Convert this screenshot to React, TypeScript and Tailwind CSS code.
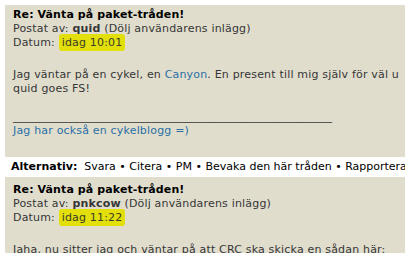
import React from "react";

const font = { fontFamily: '"DejaVu Sans", Verdana, sans-serif' };

function Highlight({ children }: { children: React.ReactNode }) {
  return (
    <span className="rounded-[3px] bg-[#e2df0a] px-[3px] py-[2px] text-[#3c3c28]">
      {children}
    </span>
  );
}

function PostHeader({ author, time }: { author: string; time: string }) {
  return (
    <div>
      <div className="font-bold text-black tracking-[0.1px]">Re: Vänta på paket-tråden!</div>
      <div>
        Postat av: <span className="font-bold">{author}</span> (Dölj användarens inlägg)
      </div>
      <div>
        Datum: <Highlight>{time}</Highlight>
      </div>
    </div>
  );
}

export default function App() {
  return (
    <div
      className="w-[405px] h-[253px] overflow-hidden bg-white text-[11px] leading-[14px] tracking-[0.18px] text-[#363636] whitespace-nowrap"
      style={font}
    >
      <div className="pt-[5px] pl-[5px]">
        <div className="bg-[#e0ddcd] pl-[8px] pt-[3px] pb-[19px]">
          <PostHeader author="quid" time="idag 10:01" />
          <div className="mt-[18px]">
            <div>
              Jag väntar på en cykel, en <span className="text-[#2a6fa6]">Canyon</span>. En
              present till mig själv för väl u
            </div>
            <div>quid goes FS!</div>
            <div>&nbsp;</div>
            <div className="tracking-normal">{"_".repeat(58)}</div>
            <div className="text-[#2a6fa6]">Jag har också en cykelblogg =)</div>
          </div>
        </div>
      </div>

      <div className="flex h-[20px] items-center pl-[11px] text-black tracking-normal">
        <span className="font-bold">Alternativ:</span>
        <span className="ml-[7px]">
          Svara • Citera • PM • Bevaka den här tråden • Rapportera dett
        </span>
      </div>

      <div className="pl-[5px]">
        <div className="bg-[#e0ddcd] pl-[8px] pt-[6px] pb-[20px]">
          <PostHeader author="pnkcow" time="idag 11:22" />
          <div className="mt-[18px]">
            <div>Jaha, nu sitter jag och väntar på att CRC ska skicka en sådan här:</div>
          </div>
        </div>
      </div>
    </div>
  );
}
